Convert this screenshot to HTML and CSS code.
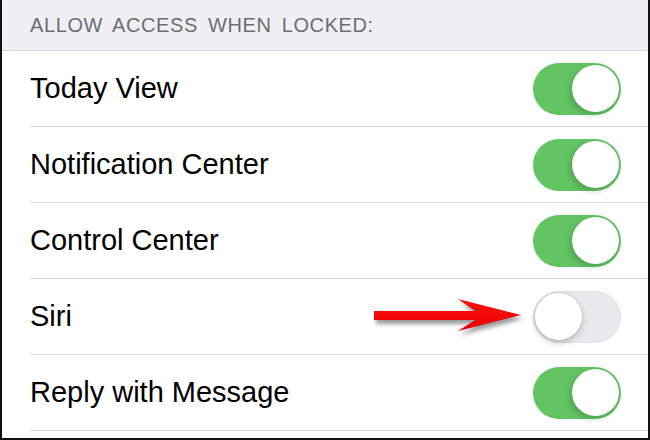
FILE: index.html
```html
<!DOCTYPE html>
<html lang="en">
<head>
<meta charset="utf-8">
<title>Allow Access When Locked</title>
<link rel="stylesheet" href="styles.css">
</head>
<body>
<div class="screen">
  <div class="section-header">ALLOW ACCESS WHEN LOCKED:</div>
  <div class="row"><span class="label">Today View</span><span class="switch on"><span class="knob"></span></span></div>
  <div class="row"><span class="label">Notification Center</span><span class="switch on"><span class="knob"></span></span></div>
  <div class="row"><span class="label">Control Center</span><span class="switch on"><span class="knob"></span></span></div>
  <div class="row"><span class="label">Siri</span><span class="switch off"><span class="knob"></span></span></div>
  <div class="row"><span class="label">Reply with Message</span><span class="switch on"><span class="knob"></span></span></div>
  <svg class="arrow" width="160" height="45" viewBox="0 0 160 45" aria-hidden="true">
    <defs>
      <linearGradient id="rg" x1="0" y1="0" x2="0" y2="1">
        <stop offset="0" stop-color="#ff1010"/>
        <stop offset="1" stop-color="#e80000"/>
      </linearGradient>
    </defs>
    <polygon points="2,16 103,16 86,4 149,20 86,36 103,25 2,25" fill="url(#rg)"/>
  </svg>
</div>
</body>
</html>
```
FILE: styles.css
```css
html, body {
  margin: 0;
  padding: 0;
  background: #fff;
}
.screen {
  position: relative;
  width: 650px;
  height: 440px;
  box-sizing: border-box;
  border: 2px solid #111;
  border-top: 0;
  background: #fff;
  overflow: hidden;
  font-family: "Liberation Sans", Arial, sans-serif;
}
.section-header {
  height: 50px;
  box-sizing: border-box;
  display: flex;
  align-items: center;
  padding-left: 28px;
  background: #efeff4;
  border-bottom: 1px solid #d4d4d9;
  color: #6d6d72;
  font-size: 20px;
  letter-spacing: 0.6px;
  word-spacing: 4px;
}
.section-header {
  height: 51px;
}
.row {
  height: 76px;
  box-sizing: border-box;
  margin-left: 28px;
  padding-right: 27px;
  border-bottom: 1px solid #dcdce0;
  display: flex;
  align-items: center;
  justify-content: space-between;
}
.label {
  font-size: 29px;
  color: #000;
}
.switch {
  position: relative;
  width: 88px;
  height: 52px;
  box-sizing: border-box;
  border-radius: 26px;
  display: flex;
  align-items: center;
  padding: 0 2px;
}
.switch.on {
  background: #62c462;
  justify-content: flex-end;
}
.switch.off {
  background: #e9e9eb;
  border: 1.5px solid #e2e2e5;
  justify-content: flex-start;
  padding: 0 1px;
}
.knob {
  width: 47px;
  height: 47px;
  border-radius: 50%;
  background: #fff;
  box-shadow: -2px 3px 6px rgba(0, 0, 0, 0.18), 0 0 0 0.5px rgba(0, 0, 0, 0.05);
}
.switch.off .knob {
  box-shadow: 0 3px 7px rgba(0, 0, 0, 0.2), 0 0 0 1px rgba(0, 0, 0, 0.06);
}
.arrow {
  position: absolute;
  left: 370px;
  top: 295px;
  filter: drop-shadow(2px 4px 2px rgba(0, 0, 0, 0.4));
}
```
